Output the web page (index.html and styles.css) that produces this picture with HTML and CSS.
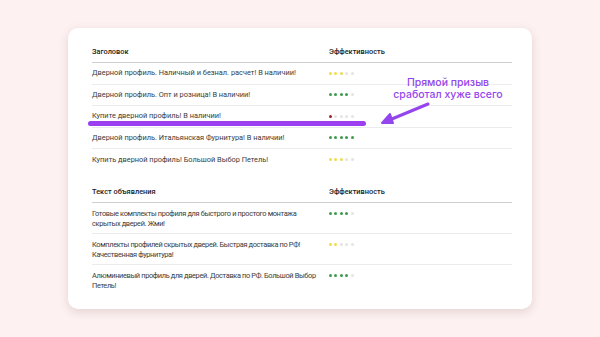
FILE: index.html
```html
<!DOCTYPE html>
<html lang="ru">
<head>
<meta charset="utf-8">
<link rel="stylesheet" href="styles.css">
</head>
<body>
<div class="card">
  <div class="table">
    <div class="row head"><div class="c1">Заголовок</div><div class="c2">Эффективность</div></div>
    <div class="row"><div class="c1">Дверной профиль. Наличный и безнал. расчет! В наличии!</div><div class="c2"><span class="dots"><i class="y"></i><i class="y"></i><i class="y"></i><i></i><i></i></span></div></div>
    <div class="row"><div class="c1">Дверной профиль. Опт и розница! В наличии!</div><div class="c2"><span class="dots"><i class="g"></i><i class="g"></i><i class="g"></i><i class="g"></i><i></i></span></div></div>
    <div class="row hl"><div class="c1">Купите дверной профиль! В наличии!</div><div class="c2"><span class="dots"><i class="r"></i><i></i><i></i><i></i><i></i></span></div><span class="marker"></span></div>
    <div class="row"><div class="c1">Дверной профиль. Итальянская Фурнитура! В наличии!</div><div class="c2"><span class="dots"><i class="g"></i><i class="g"></i><i class="g"></i><i class="g"></i><i class="g"></i></span></div></div>
    <div class="row last"><div class="c1">Купить дверной профиль! Большой Выбор Петель!</div><div class="c2"><span class="dots"><i class="y"></i><i class="y"></i><i class="y"></i><i></i><i></i></span></div></div>
  </div>
  <div class="table t2">
    <div class="row head"><div class="c1">Текст объявления</div><div class="c2">Эффективность</div></div>
    <div class="row tall"><div class="c1">Готовые комплекты профиля для быстрого и простого монтажа<br>скрытых дверей. Жми!</div><div class="c2"><span class="dots"><i class="g"></i><i class="g"></i><i class="g"></i><i class="g"></i><i></i></span></div></div>
    <div class="row tall"><div class="c1">Комплекты профилей скрытых дверей. Быстрая доставка по РФ!<br>Качественная фурнитура!</div><div class="c2"><span class="dots"><i class="y"></i><i class="y"></i><i></i><i></i><i></i></span></div></div>
    <div class="row tall last"><div class="c1">Алюминиевый профиль для дверей. Доставка по РФ. Большой Выбор<br>Петель!</div><div class="c2"><span class="dots"><i class="g"></i><i class="g"></i><i class="g"></i><i class="g"></i><i></i></span></div></div>
  </div>
  <div class="note">Прямой призыв<br>сработал хуже всего</div>
  <svg class="arrow" width="56" height="26" viewBox="0 0 56 26">
    <path d="M47 2 L6 19" stroke="#9446ec" stroke-width="3" stroke-linecap="round" fill="none"/>
    <path d="M1 21 L9 12 L12 21 Z" fill="#9446ec" stroke="#9446ec" stroke-width="2" stroke-linejoin="round"/>
  </svg>
</div>
</body>
</html>
```
FILE: styles.css
```css
html, body { margin: 0; padding: 0; }
body {
  width: 600px;
  height: 337px;
  background: #fdf1f1;
  font-family: Roboto, "Noto Sans", sans-serif;
  overflow: hidden;
}
.card {
  position: relative;
  margin: 28px 0 0 68px;
  width: 464px;
  height: 281px;
  box-sizing: border-box;
  padding: 14px 20px 0 24px;
  background: #fff;
  border-radius: 10px;
  box-shadow: 0 3px 10px rgba(120, 80, 80, 0.18);
}
.table { display: flex; flex-direction: column; }
.t2 { margin-top: 11px; }
.row {
  position: relative;
  box-sizing: border-box;
  display: grid;
  grid-template-columns: 237px 1fr;
  align-items: center;
  height: 21.5px;
  border-bottom: 1px solid #ececec;
  font-size: 7.4px;
  color: #3b3b3b;
  line-height: 10px;
}
.row.last { border-bottom: none; }
.row.head {
  height: 21px;
  border-bottom: 1px solid #cfcfcf;
  color: #222;
  font-weight: 500;
}
.row.tall {
  height: 31px;
  align-items: start;
  padding-top: 6px;
}
.c1 { white-space: nowrap; }
.tall .c1 { letter-spacing: -0.35px; }
.dots { display: flex; gap: 2.4px; align-items: center; }
.dots i {
  display: block;
  width: 3px;
  height: 3px;
  border-radius: 50%;
  background: #e4e4e4;
}
.tall .dots { margin-top: 3.5px; }
.dots i.y { background: #f0dc4c; }
.dots i.g { background: #3f9a4e; }
.dots i.r { background: #a31f2d; }
.marker {
  position: absolute;
  left: -4px;
  top: 15px;
  width: 278px;
  height: 5px;
  border-radius: 3px;
  background: #9b3ff0;
}
.note {
  position: absolute;
  left: 313px;
  top: 49px;
  width: 134px;
  text-align: center;
  color: #9446ec;
  font-family: Inter, sans-serif;
  font-size: 10.5px;
  line-height: 11.5px;
  font-weight: 500;
}
.arrow {
  position: absolute;
  left: 313px;
  top: 74px;
}
```
